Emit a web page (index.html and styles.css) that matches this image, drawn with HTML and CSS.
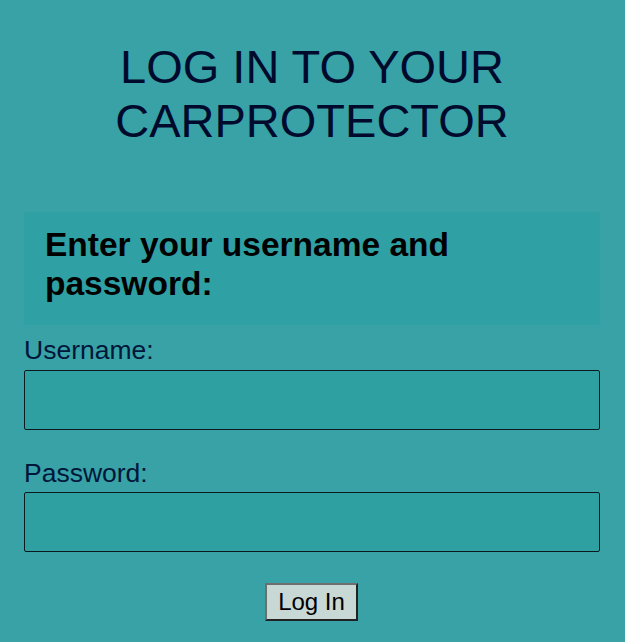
FILE: index.html
```html
<!DOCTYPE html>
<html>
<head>
<meta charset="utf-8">
<link rel="stylesheet" href="styles.css">
</head>
<body>
<div class="page">
  <h1 class="title">LOG IN TO YOUR CARPROTECTOR</h1>
  <form class="form">
    <div class="intro">
      <h2 class="intro-text">Enter your username and password:</h2>
    </div>
    <label class="label" for="u">Username:</label>
    <input class="field" id="u" type="text">
    <label class="label label-gap" for="p">Password:</label>
    <input class="field" id="p" type="password">
    <div class="actions">
      <button class="btn" type="button">Log In</button>
    </div>
  </form>
</div>
</body>
</html>
```
FILE: styles.css
```css
html, body {
  margin: 0;
  padding: 0;
  background: #38a2a6;
}
body {
  font-family: "Liberation Sans", Arial, sans-serif;
}
.page {
  padding: 40px 25px 0 24px;
}
.title {
  margin: 0 auto;
  width: 420px;
  text-align: center;
  font-size: 47px;
  line-height: 54px;
  font-weight: normal;
  color: #000a2c;
}
.form {
  display: flex;
  flex-direction: column;
  margin-top: 64px;
}
.intro {
  background: #2fa0a3;
  padding: 14px 21px 22px 21px;
  margin-bottom: 10px;
}
.intro-text {
  margin: 0;
  font-size: 33.5px;
  line-height: 38.5px;
  font-weight: bold;
  color: #000;
}
.label {
  font-size: 26.5px;
  line-height: 30.5px;
  color: #00163a;
  margin-bottom: 4px;
}
.label-gap {
  margin-top: 28px;
  margin-bottom: 4px;
}
.field {
  box-sizing: border-box;
  height: 60px;
  width: 100%;
  margin: 0;
  background: #2ea0a2;
  border: 1px solid #0b1a1f;
  border-radius: 2px;
  font-size: 20px;
  padding: 0 8px;
}
.actions {
  display: flex;
  justify-content: center;
  margin-top: 31px;
  padding-right: 1px;
}
.btn {
  font-family: "Liberation Sans", Arial, sans-serif;
  font-size: 24px;
  line-height: 28px;
  color: #000;
  background: #c8d8d4;
  border: 2px solid;
  border-color: #6e6e6e #222 #222 #6e6e6e;
  padding: 3px 10px;
  margin: 0;
  width: 93px;
  height: 38px;
}
```
